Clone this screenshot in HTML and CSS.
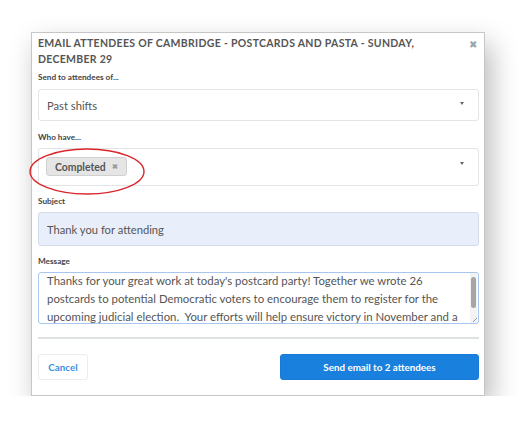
FILE: index.html
```html
<!DOCTYPE html>
<html>
<head>
<meta charset="utf-8">
<link rel="stylesheet" href="styles.css">
</head>
<body>
<div class="modal">
  <div class="head">
    <h1 class="title">EMAIL ATTENDEES OF CAMBRIDGE - POSTCARDS AND PASTA - SUNDAY, DECEMBER 29</h1>
    <span class="close">&#x2716;</span>
  </div>
  <label class="lbl lbl-first">Send to attendees of...</label>
  <div class="select sel1">
    <span class="val">Past shifts</span>
    <span class="caret"></span>
  </div>
  <label class="lbl lbl-who">Who have...</label>
  <div class="select sel2">
    <span class="chip">Completed <span class="chip-x">&#x2716;</span></span>
    <span class="caret"></span>
    <svg class="ring" width="118" height="49" viewBox="0 0 118 49"><ellipse cx="59" cy="24.5" rx="57" ry="22.5" fill="none" stroke="#d9262c" stroke-width="1.4"/></svg>
  </div>
  <label class="lbl">Subject</label>
  <div class="input subject">Thank you for attending</div>
  <label class="lbl">Message</label>
  <div class="textarea">
    <div class="msg">Thanks for your great work at today's postcard party! Together we wrote 26<br>postcards to potential Democratic voters to encourage them to register for the<br>upcoming judicial election.&nbsp; Your efforts will help ensure victory in November and a</div>
    <div class="scroll"><div class="thumb"></div></div>
    <div class="grip"></div>
  </div>
  <hr class="divider">
  <div class="actions">
    <button class="btn cancel">Cancel</button>
    <button class="btn send">Send email to 2 attendees</button>
  </div>
</div>
</body>
</html>
```
FILE: styles.css
```css
html, body {
  margin: 0;
  padding: 0;
  background: #fff;
}
body {
  padding: 32px 0 0 31px;
  font-family: Lato, "Open Sans", sans-serif;
}
.modal {
  width: 441px;
  box-sizing: content-box;
  border: 1px solid #c6c6c6;
  background: #fff;
  padding: 2px 5px 15px 6px;
  box-shadow: 6px 12px 26px rgba(0, 0, 0, 0.28);
}
.head {
  display: flex;
  align-items: flex-start;
  justify-content: space-between;
}
.title {
  margin: 0;
  font-size: 10.5px;
  font-weight: 700;
  line-height: 16px;
  letter-spacing: 0.3px;
  color: #555;
  width: 400px;
}
.close {
  font-size: 9.5px;
  color: #98a6ae;
  margin-top: 4px;
  margin-right: 2px;
}
.lbl {
  display: block;
  font-size: 8.2px;
  font-weight: 700;
  color: #444;
  line-height: 14px;
  margin: 8px 0 4px;
}
.lbl-first {
  margin-top: 3px;
  margin-bottom: 5px;
}
.lbl-who {
  margin-top: 9px;
}
.select, .input, .textarea {
  position: relative;
  box-sizing: border-box;
  border: 1px solid #e2e4e6;
  border-radius: 3px;
  display: flex;
  align-items: center;
  padding-left: 8px;
  font-size: 11.2px;
  color: #555;
}
.sel1 { height: 32px; }
.sel2 { height: 38px; padding-left: 7px; }
.caret {
  position: absolute;
  right: 14px;
  top: 50%;
  margin-top: -3px;
  width: 0;
  height: 0;
  border-left: 2.5px solid transparent;
  border-right: 2.5px solid transparent;
  border-top: 3px solid #666;
}
.sel2 .caret { margin-top: -5px; }
.chip {
  display: inline-flex;
  align-items: center;
  height: 19px;
  box-sizing: border-box;
  padding: 0 8px 0 8px;
  background: #e5e5e5;
  border: 1px solid #d0d0d0;
  border-radius: 3px;
  font-size: 10.4px;
  font-weight: 700;
  color: #555;
  margin-top: -1px;
}
.chip-x {
  font-size: 7px;
  color: #999;
  margin-left: 6px;
}
.ring {
  position: absolute;
  left: -11px;
  top: -2px;
}
.subject {
  height: 34px;
  background: #e8effb;
  border-color: #d3dcec;
}
.textarea {
  height: 52px;
  border-color: #a9c6ee;
  display: block;
  overflow: hidden;
  padding: 0 12px 0 8px;
}
.msg {
  line-height: 18px;
  font-size: 11.4px;
  margin-top: -1px;
  color: #555;
  white-space: nowrap;
}
.scroll {
  position: absolute;
  right: 1px;
  top: 0;
  bottom: 0;
  width: 7px;
  background: #f3f3f3;
}
.thumb {
  margin: 4px 1px 0;
  height: 31px;
  border-radius: 3px;
  background: #a6a6a6;
}
.grip {
  position: absolute;
  right: 1px;
  bottom: 1px;
  width: 4px;
  height: 4px;
  background: linear-gradient(135deg, transparent 50%, #999 50%, #999 60%, transparent 60%);
}
.divider {
  border: 0;
  height: 2px;
  background: #dfe2e2;
  margin: 13px 0 15px;
}
.actions {
  display: flex;
  justify-content: space-between;
}
.btn {
  font-family: Lato, "Open Sans", sans-serif;
  font-weight: 700;
  font-size: 9.8px;
  height: 26px;
  border-radius: 3px;
  cursor: pointer;
}
.cancel {
  width: 50px;
  background: #fff;
  border: 1px solid #ececec;
  color: #3a91e2;
}
.send {
  width: 199px;
  background: #1a80de;
  border: 1px solid #1a7ad6;
  color: #fff;
}
```
